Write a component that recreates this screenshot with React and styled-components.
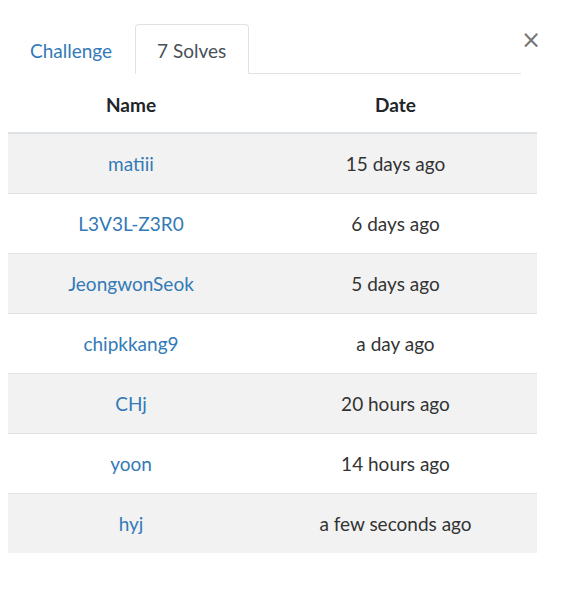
import React from 'react';
import styled, { createGlobalStyle } from 'styled-components';

const solves = [
  { name: 'matiii', date: '15 days ago' },
  { name: 'L3V3L-Z3R0', date: '6 days ago' },
  { name: 'JeongwonSeok', date: '5 days ago' },
  { name: 'chipkkang9', date: 'a day ago' },
  { name: 'CHj', date: '20 hours ago' },
  { name: 'yoon', date: '14 hours ago' },
  { name: 'hyj', date: 'a few seconds ago' },
];

const Global = createGlobalStyle`
  body {
    margin: 0;
    background: #fff;
    font-family: Lato, "Open Sans", sans-serif;
    color: #333;
  }
`;

const App = () => (
  <>
    <Global />
    <Modal>
      <TopBar>
        <Tabs>
          <Tab>Challenge</Tab>
          <Tab active>7 Solves</Tab>
        </Tabs>
        <Close>×</Close>
      </TopBar>
      <Table>
        <thead>
          <tr>
            <Th style={{ width: '246px' }}>Name</Th>
            <Th>Date</Th>
          </tr>
        </thead>
        <tbody>
          {solves.map(({ name, date }, i) => (
            <Row key={name} striped={i % 2 === 0}>
              <Td><NameLink href="#">{name}</NameLink></Td>
              <Td>{date}</Td>
            </Row>
          ))}
        </tbody>
      </Table>
    </Modal>
  </>
);

const Modal = styled.div`
  padding: 24px 30px 0 8px;
  width: 529px;
`;
const TopBar = styled.div`
  display: flex;
  align-items: flex-start;
`;
const Tabs = styled.ul`
  display: flex;
  list-style: none;
  margin: 0;
  padding: 0;
  width: 513px;
  border-bottom: 1px solid #dee2e6;
`;
const Tab = styled.li`
  height: 50px;
  box-sizing: border-box;
  display: flex;
  align-items: center;
  padding: 2px 22px 0 21px;
  margin-bottom: -1px;
  font-size: 19px;
  border: 1px solid ${p => (p.active ? '#dee2e6' : 'transparent')};
  border-bottom-color: ${p => (p.active ? '#fff' : 'transparent')};
  border-radius: 4px 4px 0 0;
  background: #fff;
  color: ${p => (p.active ? '#495057' : '#337ab7')};
  cursor: pointer;
`;
const Close = styled.button`
  border: 0;
  background: none;
  padding: 0;
  margin: 3px 0 0 0;
  width: 16px;
  font-family: "DejaVu Sans", sans-serif;
  font-size: 24px;
  line-height: 26px;
  color: #777;
  cursor: pointer;
`;
const Table = styled.table`
  width: 529px;
  border-collapse: collapse;
  font-size: 19px;
`;
const Th = styled.th`
  height: 55px;
  padding: 3px 0 0;
  font-weight: 700;
  color: #212529;
  text-align: center;
  border-bottom: 2px solid #dee2e6;
`;
const Row = styled.tr`
  background: ${p => (p.striped ? '#f2f2f2' : '#fff')};
`;
const Td = styled.td`
  height: 59px;
  padding: 0;
  text-align: center;
  border-top: 1px solid #dee2e6;
  color: #333;
`;
const NameLink = styled.a`
  color: #337ab7;
  text-decoration: none;
`;

export default App;
